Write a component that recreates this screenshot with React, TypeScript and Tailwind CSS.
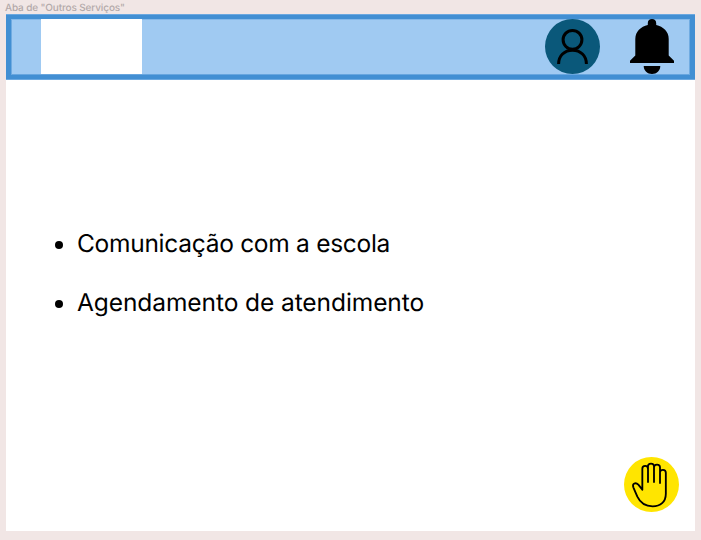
import React from "react";

const services = [
  { label: "Comunicação com a escola", tracking: "tracking-[-0.28px]" },
  { label: "Agendamento de atendimento", tracking: "tracking-[-0.08px]" },
];

function ProfileIcon() {
  return (
    <svg className="h-[55px] w-[55px]" viewBox="0 0 55 55" fill="none" aria-label="Perfil">
      <circle cx="27.5" cy="27.5" r="27.5" fill="#0a587a" />
      <circle cx="27.5" cy="20.8" r="9.4" stroke="#000" strokeWidth="3" />
      <path d="M13.6 45C13.6 36.8 19.4 31.2 27.5 31.2S41.4 36.8 41.4 45" stroke="#000" strokeWidth="3" />
    </svg>
  );
}

function BellIcon() {
  return (
    <svg className="h-[55px] w-[44px]" viewBox="0 0 44 55" aria-label="Notificações">
      <path d="M17.8 4C17.8 1.6 19.6 0 22 0s4.2 1.6 4.2 4v2C33.2 7.6 38.7 12.4 38.7 20v16.5l5.3 5.3V44H0v-2.2l5.3-5.3V20C5.3 12.4 10.8 7.6 17.8 6Z" />
      <path d="M13.7 47h16.6c0 4.5-3.7 8-8.3 8s-8.3-3.5-8.3-8Z" />
    </svg>
  );
}

function HandIcon() {
  return (
    <svg className="h-[55px] w-[55px]" viewBox="0 3 165 165" fill="none" aria-label="Libras">
      <circle cx="82.5" cy="85.5" r="82.5" fill="#ffe500" />
      <path
        d="M55 101V38C55 27 72 27 72 38V78M72 38V31C72 20 90 20 90 31V78M90 34C90 23 108 23 108 34V81M108 49C108 39 125.5 39 125.5 50V113C125.5 138 109 151 86 151C63 151 49 141 40 122L28 94C24 82 35 78 43 86L55 101"
        stroke="#000"
        strokeWidth="5.5"
        strokeLinecap="round"
        strokeLinejoin="round"
      />
    </svg>
  );
}

export default function App() {
  return (
    <div className="h-[540px] w-[701px] overflow-hidden bg-[#f1e6e5] pl-[6px] font-['Inter',sans-serif] [text-rendering:geometricPrecision]">
      <div className="h-[14px] pt-px text-[10px] leading-[14px] font-[450] tracking-[-0.13px] text-[#b3a9a9]">
        <span className="-ml-px">Aba de "Outros Serviços"</span>
      </div>
      <main className="flex h-[517px] w-[689px] flex-col bg-white">
        <header className="h-[66px] border-y border-[#6ba8e0] bg-[#428fd3] px-[5px] py-1">
          <div className="flex h-14 items-start border border-t-[#84b8e9] border-r-[#70abe1] border-b-[#68a6df] border-l-[#70abe1] bg-[#a0caf2]">
            <div className="-mt-px ml-[29px] h-[55px] w-[101px] shrink-0 bg-white" />
            <div className="-mt-px mr-[15px] ml-auto flex gap-[30px]">
              <ProfileIcon />
              <BellIcon />
            </div>
          </div>
        </header>
        <ul className="mt-[148px] ml-[49px] flex flex-col gap-[29px] text-[24.5px] leading-[30px] font-[370] text-black">
          {services.map(({ label, tracking }) => (
            <li key={label} className="flex items-center whitespace-nowrap">
              <span className="mt-[3px] mr-[14px] h-2 w-2 rounded-full bg-black" />
              <span className={tracking}>{label}</span>
            </li>
          ))}
        </ul>
        <button className="mt-auto mr-[16px] mb-[19px] self-end">
          <HandIcon />
        </button>
      </main>
    </div>
  );
}
